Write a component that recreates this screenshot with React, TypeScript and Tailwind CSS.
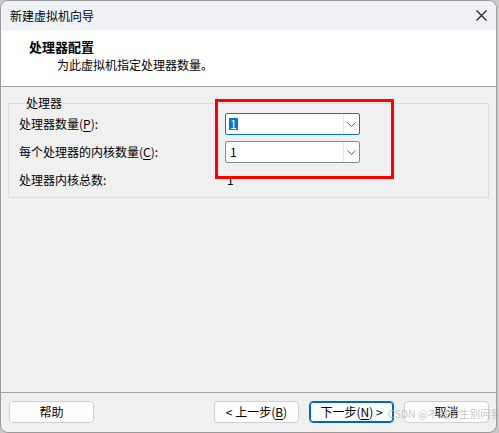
import React from "react";

const font = { fontFamily: '"Noto Sans CJK SC", "Microsoft YaHei UI", sans-serif' };

// single-line combo box with a chevron button on the right
const Combo = ({ value, focused }: { value: string; focused?: boolean }) => (
  <div
    className={`flex h-[22px] w-[135px] items-stretch rounded-[2px] bg-white border ${
      focused ? "border-[#0078d7]" : "border-[#8a8a8a]"
    }`}
  >
    <div className="flex flex-1 items-center pl-[3px] text-[12px] leading-none text-black">
      <span className={focused ? "bg-[#0078d7] text-white px-[1px]" : "px-[1px]"}>{value}</span>
    </div>
    <div className="flex w-[16px] items-center justify-center border-l border-[#dce7f3]">
      <svg width="9" height="5" viewBox="0 0 9 5" fill="none">
        <path d="M0.5 0.5 L4.5 4.5 L8.5 0.5" stroke="#606060" strokeWidth="1" />
      </svg>
    </div>
  </div>
);

const Btn = ({ children, primary }: { children: React.ReactNode; primary?: boolean }) => (
  <button
    className={`h-[22px] w-[85px] rounded-[4px] bg-[#fdfdfd] text-[12px] leading-none text-black ${
      primary ? "border border-[#0067c0] outline outline-1 outline-[#0067c0] -outline-offset-2" : "border border-[#d0d0d0]"
    }`}
  >
    {children}
  </button>
);

const Key = ({ k }: { k: string }) => <span className="underline underline-offset-2">{k}</span>;

export default function App() {
  return (
    <div className="relative h-[433px] w-[499px] bg-[#c9c9c9]" style={font}>
      <div className="relative flex h-[433px] w-[497px] flex-col overflow-hidden rounded-[8px] border border-[#9a9a9a] bg-[#f0f0f0]">
        {/* title bar */}
        <div className="flex h-[29px] items-center justify-between bg-[#eef2f7] pl-[9px] pr-[8px]">
          <span className="text-[12px] text-black">新建虚拟机向导</span>
          <svg width="11" height="11" viewBox="0 0 11 11" className="mr-[1px]">
            <path d="M0.5 0.5 L10.5 10.5 M10.5 0.5 L0.5 10.5" stroke="#1a1a1a" strokeWidth="1.1" />
          </svg>
        </div>

        {/* page header */}
        <div className="h-[57px] border-b border-[#a0a0a0] bg-white pl-[28px] pt-[7px]">
          <div className="text-[13px] font-bold leading-[20px] text-black">处理器配置</div>
          <div className="pl-[28px] text-[12px] leading-[16px] text-black">为此虚拟机指定处理器数量。</div>
        </div>

        {/* body */}
        <div className="flex-1 px-[7px] pt-[8px]">
          <fieldset className="border border-[#dcdcdc] pl-[10px] pb-[9px] pt-[2px]">
            <legend className="ml-[6px] px-[1px] text-[12px] leading-[16px] text-black">处理器</legend>
            <div className="grid grid-cols-[206px_1fr] items-center gap-y-[6px] text-[12px] text-black">
              <span>
                处理器数量(<Key k="P" />):
              </span>
              <Combo value="1" focused />
              <span>
                每个处理器的内核数量(<Key k="C" />):
              </span>
              <Combo value="1" />
              <span className="mt-[3px] leading-[16px]">处理器内核总数:</span>
              <span className="mt-[3px] pl-[2px] leading-[16px]">1</span>
            </div>
          </fieldset>
        </div>

        {/* buttons */}
        <div className="flex h-[40px] items-start justify-between border-t border-[#a0a0a0] pl-[8px] pr-[7px] pt-[8px]">
          <Btn>帮助</Btn>
          <div className="flex gap-[10px]">
            <Btn>
              &lt; 上一步(<Key k="B" />)
            </Btn>
            <Btn primary>
              下一步(<Key k="N" />) &gt;
            </Btn>
            <Btn>取消</Btn>
          </div>
        </div>

        {/* red highlight around the processor fields */}
        <div className="absolute left-[214px] top-[98px] h-[80px] w-[179px] border-[3px] border-[#ff0000]" />
      </div>

      <span className="absolute left-[388px] top-[406px] whitespace-nowrap text-[10.5px] leading-[16px] text-[#b8b8b8]/80">
        CSDN @不是学生别问我
      </span>
    </div>
  );
}
